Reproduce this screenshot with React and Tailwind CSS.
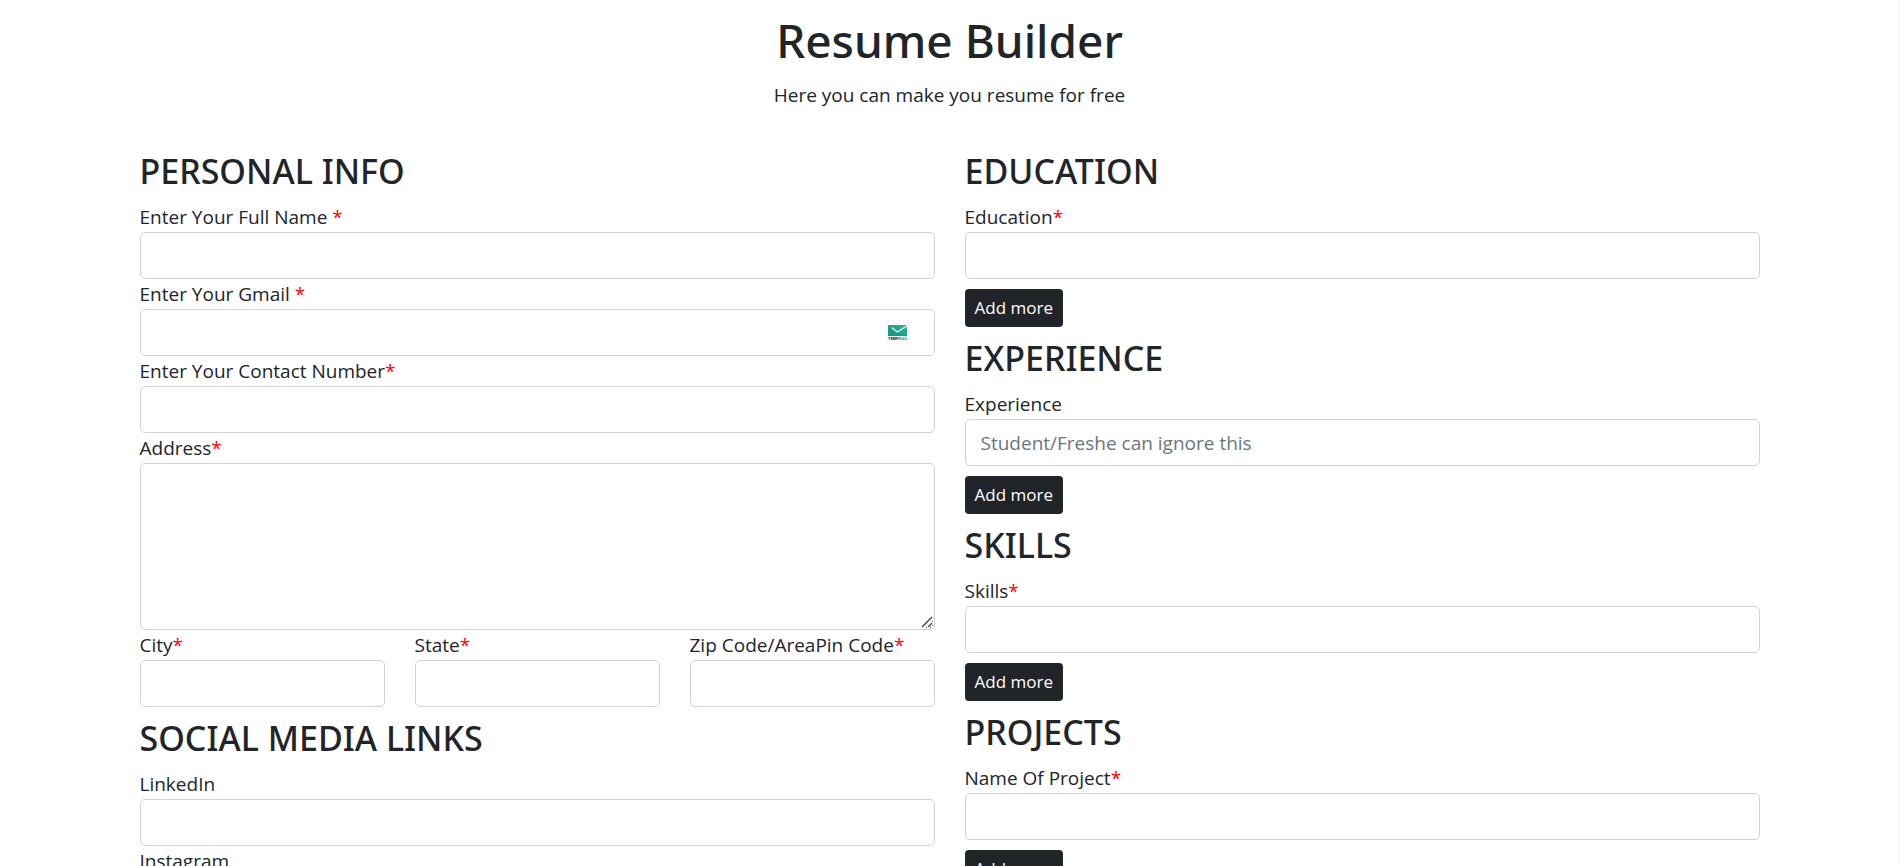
import { useId, useState } from "react";

const controlClass =
  "block w-full rounded-[5px] border border-[#ced4da] bg-white px-[15px] text-[19px] text-[#212529] placeholder:text-[#6c757d] placeholder:opacity-100 focus:border-[#86b7fe] focus:outline-none";

function Label({ htmlFor, text, required, spaced }) {
  return (
    <label htmlFor={htmlFor} className="block leading-[30px]">
      {text}
      {required && (
        <>
          {spaced && " "}
          <span className="text-[#ff0000]">*</span>
        </>
      )}
    </label>
  );
}

function TempMailIcon() {
  return (
    <svg viewBox="0 0 25 25" className="size-[25px]" aria-hidden="true">
      <defs>
        <linearGradient id="envelope" x1="0" y1="1" x2="1" y2="0">
          <stop offset="0" stopColor="#0f8f80" />
          <stop offset="1" stopColor="#29bb92" />
        </linearGradient>
      </defs>
      <rect width="25" height="25" rx="3" fill="#fafafa" />
      <rect x="3" y="5" width="19" height="11" rx="0.6" fill="url(#envelope)" />
      <path d="M7 7.8 L12.3 12 L22 6" fill="none" stroke="#ffffff" strokeWidth="1.4" />
      <text
        x="3"
        y="20"
        fontSize="3.6"
        fontWeight="800"
        fontFamily="Inter, sans-serif"
        fill="#1c3144"
      >
        TEMP<tspan fill="#25b590">MAIL</tspan>
      </text>
    </svg>
  );
}

function Field({ label, required, spaced, type = "text", placeholder, badge }) {
  const id = useId();
  return (
    <div>
      <Label htmlFor={id} text={label} required={required} spaced={spaced} />
      <div className="relative">
        <input id={id} type={type} placeholder={placeholder} className={`${controlClass} h-[47px]`} />
        {badge && (
          <button
            type="button"
            aria-label="Use a temporary address"
            className="absolute top-[11px] right-[25px]"
          >
            {badge}
          </button>
        )}
      </div>
    </div>
  );
}

function AddressField() {
  const id = useId();
  return (
    <div>
      <Label htmlFor={id} text="Address" required />
      <div className="relative">
        <textarea id={id} className={`${controlClass} h-[167px] resize-y py-2`} />
        <svg
          viewBox="0 0 14 14"
          className="pointer-events-none absolute right-0.5 bottom-0.5 size-3.5"
          aria-hidden="true"
        >
          <rect width="13" height="13" fill="#ffffff" />
          <path d="M3 13 L13 3 M9 13 L13 9" stroke="#4a4a4a" strokeWidth="1.5" />
        </svg>
      </div>
    </div>
  );
}

function Section({ title, children }) {
  return (
    <section className="flex flex-col">
      <h3 className="mb-2.5 font-['Noto_Sans','Open_Sans',sans-serif] text-[34px] leading-[42px] font-medium">
        {title}
      </h3>
      {children}
    </section>
  );
}

function RepeatableSection({ title, label, required, placeholder }) {
  const [count, setCount] = useState(1);
  return (
    <Section title={title}>
      <Field label={label} required={required} placeholder={placeholder} />
      {Array.from({ length: count - 1 }, (_, i) => (
        <input
          key={i}
          type="text"
          aria-label={label}
          placeholder={placeholder}
          className={`${controlClass} mt-2.5 h-[47px]`}
        />
      ))}
      <button
        type="button"
        onClick={() => setCount(count + 1)}
        className="mt-2.5 h-[38px] cursor-pointer self-start rounded-[4px] bg-[#212529] px-2.5 text-[17px] text-white"
      >
        Add more
      </button>
    </Section>
  );
}

export default function App() {
  return (
    <div className="min-h-screen border-r border-[#f0f0f0] bg-white font-['Open_Sans','Noto_Sans',sans-serif] text-[19px] text-[#212529]">
      <main className="mx-auto max-w-[1650px] px-[15px] pt-[10px] pb-10">
        <header className="text-center">
          <h1 className="font-['Noto_Sans','Open_Sans',sans-serif] text-[46px] leading-[60px] font-medium">
            Resume Builder
          </h1>
          <p className="mt-2.5 leading-[30px]">Here you can make you resume for free</p>
        </header>

        <form className="mt-10 grid grid-cols-1 items-start gap-x-[30px] gap-y-2.5 lg:grid-cols-2">
          <div className="flex flex-col gap-2.5">
            <Section title="PERSONAL INFO">
              <Field label="Enter Your Full Name" required spaced />
              <Field label="Enter Your Gmail" type="email" required spaced badge={<TempMailIcon />} />
              <Field label="Enter Your Contact Number" type="tel" required />
              <AddressField />
              <div className="grid grid-cols-3 gap-x-[30px]">
                <Field label="City" required />
                <Field label="State" required />
                <Field label="Zip Code/AreaPin Code" required />
              </div>
            </Section>
            <Section title="SOCIAL MEDIA LINKS">
              <Field label="LinkedIn" />
              <Field label="Instagram" />
            </Section>
          </div>

          <div className="flex flex-col gap-2.5">
            <RepeatableSection title="EDUCATION" label="Education" required />
            <RepeatableSection
              title="EXPERIENCE"
              label="Experience"
              placeholder="Student/Freshe can ignore this"
            />
            <RepeatableSection title="SKILLS" label="Skills" required />
            <RepeatableSection title="PROJECTS" label="Name Of Project" required />
          </div>
        </form>
      </main>
    </div>
  );
}
